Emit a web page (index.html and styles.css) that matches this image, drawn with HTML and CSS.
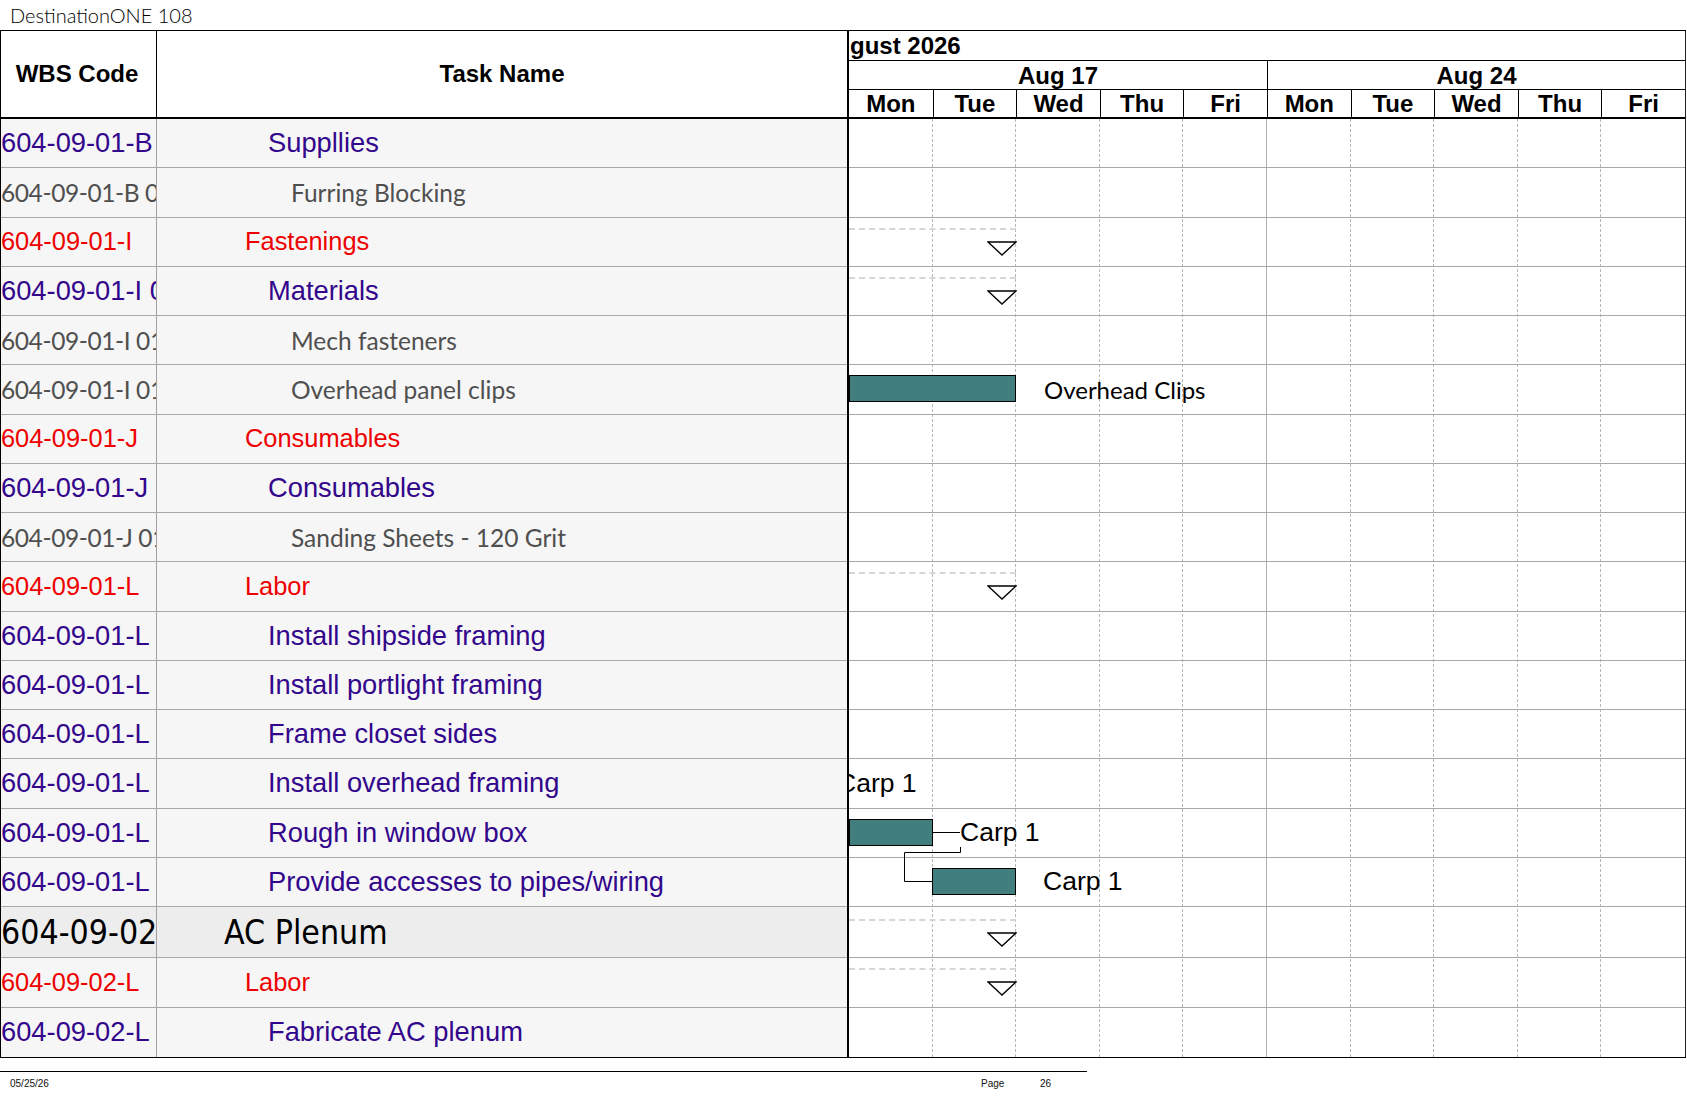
FILE: index.html
```html
<!DOCTYPE html>
<html lang="en">
<head>
<meta charset="utf-8">
<title>DestinationONE 108 - Gantt</title>
<link rel="stylesheet" href="styles.css">
</head>
<body>
<div class="title">DestinationONE 108</div>
<div class="sheet">
  <div class="left">
    <div class="lhead">
      <div class="h-wbs">WBS Code</div>
      <div class="h-task">Task Name</div>
    </div>
    <div class="lrow lv2"><div class="wbs">604-09-01-B</div><div class="task">Suppllies</div></div>
    <div class="lrow lv3"><div class="wbs">604-09-01-B 01</div><div class="task">Furring Blocking</div></div>
    <div class="lrow lv1"><div class="wbs">604-09-01-I</div><div class="task">Fastenings</div></div>
    <div class="lrow lv2"><div class="wbs">604-09-01-I 01</div><div class="task">Materials</div></div>
    <div class="lrow lv3"><div class="wbs">604-09-01-I 01 01</div><div class="task">Mech fasteners</div></div>
    <div class="lrow lv3"><div class="wbs">604-09-01-I 01 02</div><div class="task">Overhead panel clips</div></div>
    <div class="lrow lv1"><div class="wbs">604-09-01-J</div><div class="task">Consumables</div></div>
    <div class="lrow lv2"><div class="wbs">604-09-01-J 01</div><div class="task">Consumables</div></div>
    <div class="lrow lv3"><div class="wbs">604-09-01-J 01 01</div><div class="task">Sanding Sheets - 120 Grit</div></div>
    <div class="lrow lv1"><div class="wbs">604-09-01-L</div><div class="task">Labor</div></div>
    <div class="lrow lv2"><div class="wbs">604-09-01-L 01</div><div class="task">Install shipside framing</div></div>
    <div class="lrow lv2"><div class="wbs">604-09-01-L 02</div><div class="task">Install portlight framing</div></div>
    <div class="lrow lv2"><div class="wbs">604-09-01-L 03</div><div class="task">Frame closet sides</div></div>
    <div class="lrow lv2"><div class="wbs">604-09-01-L 04</div><div class="task">Install overhead framing</div></div>
    <div class="lrow lv2"><div class="wbs">604-09-01-L 05</div><div class="task">Rough in window box</div></div>
    <div class="lrow lv2"><div class="wbs">604-09-01-L 06</div><div class="task">Provide accesses to pipes/wiring</div></div>
    <div class="lrow lv0 big"><div class="wbs">604-09-02</div><div class="task">AC Plenum</div></div>
    <div class="lrow lv1 end"><div class="wbs">604-09-02-L</div><div class="task">Labor</div></div>
    <div class="lrow lv2 end last"><div class="wbs">604-09-02-L 01</div><div class="task">Fabricate AC plenum</div></div>
  </div>

  <div class="gantt">
    <div class="ghead">
      <div class="g-month"><span class="month-txt">August 2026</span></div>
      <div class="g-weeks"><div>Aug 17</div><div>Aug 24</div></div>
      <div class="g-days">
        <div>Mon</div><div>Tue</div><div>Wed</div><div>Thu</div><div>Fri</div>
        <div>Mon</div><div>Tue</div><div>Wed</div><div>Thu</div><div>Fri</div>
      </div>
    </div>
    <div class="gbody">
      <div class="gcols">
        <div></div><div></div><div></div><div></div><div class="wk"></div>
        <div></div><div></div><div></div><div></div><div class="lastcol"></div>
      </div>
      <div class="grow"></div>
      <div class="grow"></div>
      <div class="grow">
        <div class="sum"></div>
        <svg class="tri" width="30" height="15" viewBox="0 0 30 15"><polygon points="1,1 29,1 15,14" /></svg>
      </div>
      <div class="grow">
        <div class="sum"></div>
        <svg class="tri" width="30" height="15" viewBox="0 0 30 15"><polygon points="1,1 29,1 15,14" /></svg>
      </div>
      <div class="grow"></div>
      <div class="grow">
        <div class="bar bar-2d"></div>
        <div class="lbl lbl-soft lbl-clips">Overhead Clips</div>
      </div>
      <div class="grow"></div>
      <div class="grow"></div>
      <div class="grow"></div>
      <div class="grow">
        <div class="sum"></div>
        <svg class="tri" width="30" height="15" viewBox="0 0 30 15"><polygon points="1,1 29,1 15,14" /></svg>
      </div>
      <div class="grow"></div>
      <div class="grow"></div>
      <div class="grow"></div>
      <div class="grow">
        <div class="lbl lbl-prev">Carp 1</div>
      </div>
      <div class="grow">
        <div class="bar bar-mon"></div>
        <div class="lbl lbl-a">Carp 1</div>
      </div>
      <div class="grow">
        <div class="bar bar-tue"></div>
        <div class="lbl lbl-b">Carp 1</div>
      </div>
      <div class="grow big">
        <div class="sum sum-big"></div>
        <svg class="tri tri-big" width="30" height="15" viewBox="0 0 30 15"><polygon points="1,1 29,1 15,14" /></svg>
      </div>
      <div class="grow end">
        <div class="sum"></div>
        <svg class="tri" width="30" height="15" viewBox="0 0 30 15"><polygon points="1,1 29,1 15,14" /></svg>
      </div>
      <div class="grow end last"></div>
      <svg class="links" width="836" height="938" viewBox="0 0 836 938">
        <polyline points="83,713.5 111,713.5" />
        <polyline points="111.5,728 111.5,733.5 55.5,733.5 55.5,762.5 83,762.5" />
      </svg>
    </div>
  </div>
</div>
<div class="footer">
  <span class="f-date">05/25/26</span>
  <span class="f-page">Page</span>
  <span class="f-num">26</span>
</div>
</body>
</html>
```

FILE: styles.css
```css
* {
  box-sizing: border-box;
  margin: 0;
  padding: 0;
}

body {
  margin: 0;
  width: 1687px;
  height: 1097px;
  overflow: hidden;
  background: #ffffff;
  font-family: "Liberation Sans", Arial, sans-serif;
  color: #000;
}

.title {
  height: 30px;
  line-height: 30px;
  padding-left: 10px;
  font-family: Lato, "Open Sans", sans-serif;
  font-weight: 300;
  font-size: 20px;
  color: #000;
}

.sheet {
  display: flex;
  width: 1686px;
  border-top: 1px solid #000;
  border-bottom: 1px solid #000;
}

/* ---------- left table ---------- */
.left {
  width: 847px;
  border-left: 1px solid #000;
}

.lhead {
  display: flex;
  height: 88px;
  border-bottom: 2px solid #000;
  font-weight: bold;
  font-size: 24px;
}

.h-wbs {
  width: 156px;
  border-right: 1px solid #000;
  display: flex;
  align-items: center;
  justify-content: center;
  padding-right: 3px;
}

.h-task {
  flex: 1;
  display: flex;
  align-items: center;
  justify-content: center;
}

.lrow {
  display: flex;
  height: 49.25px;
  background: #f6f6f6;
  border-bottom: 1px solid #a8a8a8;
  white-space: nowrap;
}

.lrow.big {
  height: 51px;
  background: #ededed;
}

.lrow.end {
  height: 49.5px;
}

.lrow.last {
  border-bottom: none;
}

.wbs {
  width: 156px;
  flex: none;
  border-right: 1px solid #a0a0a0;
  overflow: hidden;
  display: flex;
  align-items: center;
  padding-left: 0;
}

.task {
  flex: 1;
  overflow: hidden;
  display: flex;
  align-items: center;
}

.lv0 {
  font-family: "DejaVu Sans Condensed", "DejaVu Sans", sans-serif;
  font-stretch: condensed;
  font-size: 33.6px;
  color: #000;
}
.lv0 .task { padding-left: 67px; }

.lv1 {
  font-size: 25.4px;
  color: #ee0000;
}
.lv1 .task { padding-left: 88px; }

.lv2 {
  font-size: 27.3px;
  color: #33078c;
}
.lv2 .task { padding-left: 111px; }

.lv3 {
  font-family: Lato, "Open Sans", sans-serif;
  font-size: 24.5px;
  color: #4f4f4f;
}
.lv3 .wbs { letter-spacing: -0.4px; }
.lv3 .task { padding-left: 134px; }

/* ---------- gantt ---------- */
.gantt {
  width: 839px;
  border-left: 2px solid #000;
  border-right: 1px solid #222;
}

.ghead {
  height: 88px;
  border-bottom: 2px solid #000;
  font-weight: bold;
  font-size: 24px;
}

.g-month {
  height: 30px;
  border-bottom: 1px solid #000;
  overflow: hidden;
  white-space: nowrap;
  line-height: 29px;
}

.month-txt {
  display: inline-block;
  margin-left: -31px;
}

.g-weeks {
  display: grid;
  grid-template-columns: 1fr 1fr;
  height: 29px;
  border-bottom: 1px solid #000;
}

.g-weeks div {
  text-align: center;
  line-height: 28px;
  padding-top: 1px;
}

.g-weeks div + div {
  border-left: 1px solid #000;
}

.g-days {
  display: grid;
  grid-template-columns: repeat(10, 1fr);
  height: 27px;
}

.g-days div {
  text-align: center;
  line-height: 27px;
}

.g-days div + div {
  border-left: 1px solid #000;
}

.gbody {
  position: relative;
  overflow: hidden;
}

.gcols {
  position: absolute;
  inset: 0;
  display: grid;
  grid-template-columns: repeat(10, 1fr);
}

.gcols div {
  border-right: 1px dashed #b8b8b8;
}

.gcols .wk {
  border-right: 1px solid #b0b0b0;
}

.gcols .lastcol {
  border-right: none;
}

.grow {
  position: relative;
  height: 49.25px;
  border-bottom: 1px solid #a8a8a8;
}

.grow.big { height: 51px; }
.grow.end { height: 49.5px; }
.grow.last { border-bottom: none; }

.bar {
  position: absolute;
  top: 10px;
  height: 27px;
  background: #407f7d;
  border: 1px solid #000;
}

.bar-2d { left: 0; width: 167px; }
.bar-mon { left: 0; width: 84px; }
.bar-tue { left: 83px; width: 84px; }

.sum {
  position: absolute;
  left: 0;
  top: 10px;
  width: 167px;
  border-top: 2px dashed #d6d6d6;
}

.sum-big { top: 12px; }

.tri {
  position: absolute;
  left: 138px;
  top: 23px;
}

.tri-big { top: 25px; }

.tri polygon {
  fill: #fff;
  stroke: #000;
  stroke-width: 1.3;
}

.lbl {
  position: absolute;
  top: 0;
  bottom: 0;
  display: flex;
  align-items: center;
  white-space: nowrap;
  font-size: 26.5px;
  color: #000;
}

.lbl-soft {
  font-family: Lato, "Open Sans", sans-serif;
  font-size: 24px;
}

.lbl-clips { left: 195px; }
.lbl-prev { left: -12px; }
.lbl-a { left: 111px; }
.lbl-b { left: 194px; }

.links {
  position: absolute;
  left: 0;
  top: 0;
  pointer-events: none;
}

.links polyline {
  fill: none;
  stroke: #000;
  stroke-width: 1;
}

/* ---------- footer ---------- */
.footer {
  display: flex;
  width: 1087px;
  margin-top: 13px;
  border-top: 1px solid #000;
  padding-top: 6px;
  padding-left: 10px;
  font-size: 10px;
  color: #111;
}

.f-date { width: 971px; }
.f-page { width: 59px; }
```
